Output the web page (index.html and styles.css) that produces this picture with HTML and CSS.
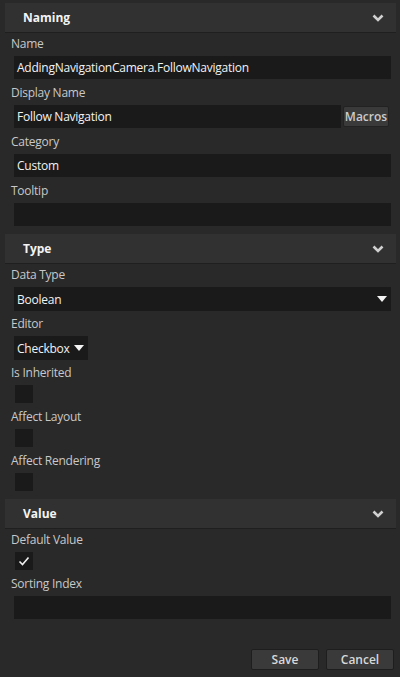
FILE: index.html
```html
<!DOCTYPE html>
<html lang="en">
<head>
    <meta charset="UTF-8">
    <title>Property Editor</title>
    <link rel="stylesheet" href="styles.css">
</head>
<body>
    <div class="wrap">
        <!-- Naming -->
        <div class="section">
            <div class="header">
                <h2>Naming</h2>
                <span class="chevron"><svg width="12" height="8" viewBox="0 0 12 8"><polyline points="1.5,1.5 6,6 10.5,1.5" fill="none" stroke="#d0d0d0" stroke-width="2.6"/></svg></span>
            </div>
            <div class="fields">
                <div class="field">
                    <label>Name</label>
                    <div class="input">AddingNavigationCamera.FollowNavigation</div>
                </div>
                <div class="field">
                    <label>Display Name</label>
                    <div class="row">
                        <div class="input">Follow Navigation</div>
                        <button class="btn_macros">Macros</button>
                    </div>
                </div>
                <div class="field">
                    <label>Category</label>
                    <div class="input">Custom</div>
                </div>
                <div class="field">
                    <label>Tooltip</label>
                    <div class="input"></div>
                </div>
            </div>
        </div>
        <!-- Type -->
        <div class="section">
            <div class="header">
                <h2>Type</h2>
                <span class="chevron"><svg width="12" height="8" viewBox="0 0 12 8"><polyline points="1.5,1.5 6,6 10.5,1.5" fill="none" stroke="#d0d0d0" stroke-width="2.6"/></svg></span>
            </div>
            <div class="fields">
                <div class="field">
                    <label>Data Type</label>
                    <div class="select">Boolean<span class="caret"></span></div>
                </div>
                <div class="field">
                    <label>Editor</label>
                    <div class="select small">Checkbox<span class="caret"></span></div>
                </div>
                <div class="field">
                    <label>Is Inherited</label>
                    <div class="check"></div>
                </div>
                <div class="field">
                    <label>Affect Layout</label>
                    <div class="check"></div>
                </div>
                <div class="field">
                    <label>Affect Rendering</label>
                    <div class="check"></div>
                </div>
            </div>
        </div>
        <!-- Value -->
        <div class="section">
            <div class="header">
                <h2>Value</h2>
                <span class="chevron"><svg width="12" height="8" viewBox="0 0 12 8"><polyline points="1.5,1.5 6,6 10.5,1.5" fill="none" stroke="#d0d0d0" stroke-width="2.6"/></svg></span>
            </div>
            <div class="fields">
                <div class="field">
                    <label>Default Value</label>
                    <div class="check"><svg width="12" height="10" viewBox="0 0 12 10"><polyline points="1.5,5.5 4.5,8.5 10.5,1.5" fill="none" stroke="#f0f0f0" stroke-width="1.6"/></svg></div>
                </div>
                <div class="field">
                    <label>Sorting Index</label>
                    <div class="input"></div>
                </div>
            </div>
        </div>
        <div class="footer">
            <button class="btn">Save</button>
            <button class="btn">Cancel</button>
        </div>
    </div>
</body>
</html>
```

FILE: styles.css
```css
html, body, div, span, h2, label, button{
    margin: 0;
    padding: 0;
    border: 0;
}
html, body{
    height: 100%;
}
body{
    background-color: #292929;
    color: #c8c8c8;
    font-family: "Open Sans", "Noto Sans", sans-serif;
    font-size: 12px;
    letter-spacing: -0.25px;
}
.wrap{
    display: flex;
    flex-direction: column;
    min-height: 100%;
}
.section .header{
    display: flex;
    align-items: center;
    justify-content: space-between;
    height: 29px;
    margin: 3px 4px 0 5px;
    padding: 0 12px 0 18px;
    background-color: #313131;
    border-bottom: 1px solid #1f1f1f;
}
.section .header h2{
    font-size: 12px;
    font-weight: bold;
    color: #f4f4f4;
    letter-spacing: 0;
}
.chevron{
    display: flex;
}
.fields{
    display: flex;
    flex-direction: column;
    padding: 1px 0;
}
.field{
    display: flex;
    flex-direction: column;
    gap: 3px;
}
.field label{
    display: block;
    height: 19px;
    line-height: 19px;
    padding-left: 11px;
    color: #c8c8c8;
}
.input, .select{
    display: flex;
    align-items: center;
    height: 23px;
    margin: 0 9px 4px 14px;
    padding: 0 3px;
    background-color: #1a1a1a;
    color: #f2f2f2;
}
.row{
    display: flex;
    align-items: center;
    gap: 2px;
    margin: 0 11px 4px 14px;
}
.row .input{
    flex: 1;
    margin: 0;
}
.btn_macros{
    width: 46px;
    height: 21px;
    background-color: #3a3a3a;
    border: 1px solid #222;
    border-radius: 2px;
    color: #cccccc;
    font-family: inherit;
    font-size: 12px;
    font-weight: 600;
    letter-spacing: 0;
}
.select{
    justify-content: space-between;
    height: 24px;
    margin-bottom: 3px;
    padding-right: 4px;
}
.select.small{
    align-self: flex-start;
    width: 67px;
}
.caret{
    width: 0;
    height: 0;
    border-left: 5px solid transparent;
    border-right: 5px solid transparent;
    border-top: 6px solid #f4f4f4;
}
.check{
    display: flex;
    align-items: center;
    justify-content: center;
    width: 18px;
    height: 18px;
    margin: 0 0 4px 15px;
    background-color: #1a1a1a;
}
.footer{
    display: flex;
    justify-content: flex-end;
    gap: 7px;
    margin-top: auto;
    padding: 0 6px 7px 0;
}
.btn{
    width: 68px;
    height: 21px;
    background-color: #3a3a3a;
    border: 1px solid #1e1e1e;
    border-radius: 2px;
    color: #d8d8d8;
    font-family: inherit;
    font-size: 12px;
    font-weight: 600;
    letter-spacing: 0;
}
```
